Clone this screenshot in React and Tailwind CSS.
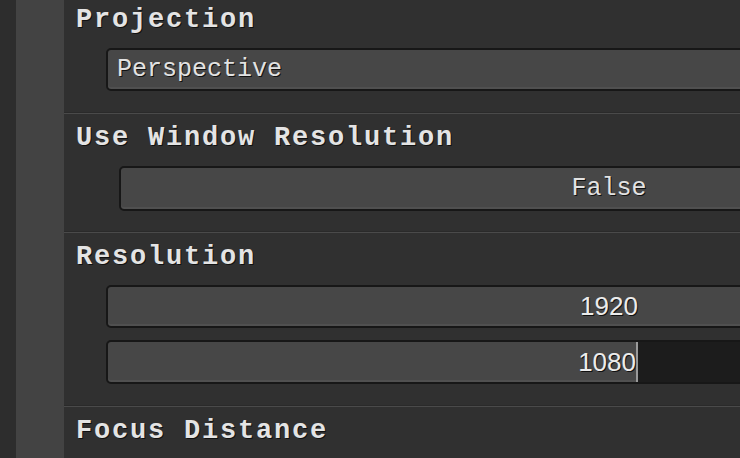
import React from 'react';

const mono = { fontFamily: '"Liberation Mono", "DejaVu Sans Mono", monospace' };

const Heading = ({ children }) => (
  <div
    className="h-[40px] pl-[12px] text-[27px] leading-[40px] font-bold tracking-[1.8px] text-[#e4e4e4] whitespace-nowrap [text-shadow:1px_1px_0_#111]"
    style={mono}
  >
    {children}
  </div>
);

const Field = ({ left, width = 1006, height = 43, className = '', children }) => (
  <div
    className={`mt-[8px] shrink-0 rounded-[5px] border-2 border-[#171717] bg-[#474747] shadow-[inset_0_-2px_0_#505050] overflow-hidden ${className}`}
    style={{ marginLeft: left, width, height }}
  >
    {children}
  </div>
);

const Separator = () => (
  <div className="shrink-0 h-[2px] border-t border-[#2a2a2a] bg-[#4a4a4a]" />
);

const Section = ({ className = '', children }) => (
  <div className={`shrink-0 flex flex-col pt-[4px] ${className}`}>{children}</div>
);

export default function App() {
  return (
    <div className="w-[740px] h-[458px] overflow-hidden flex bg-[#313131]">
      {/* left gutter */}
      <div className="w-4 shrink-0 bg-[#2d2d2d]" />
      <div className="w-12 shrink-0 bg-[#434343]" />

      {/* inspector panel */}
      <div className="flex-1 min-w-0 overflow-hidden flex flex-col bg-[#303030]">
        {/* Projection */}
        <Section className="-mt-[4px] pb-[21px]">
          <Heading>Projection</Heading>
          <Field left={42} height={43}>
            <div
              className="pl-[9px] text-[25px] leading-[39px] text-[#e2e2e2] [text-shadow:1px_1px_0_#111]"
              style={mono}
            >
              Perspective
            </div>
          </Field>
        </Section>
        <Separator />

        {/* Use Window Resolution */}
        <Section className="pb-[20px]">
          <Heading>Use Window Resolution</Heading>
          <Field left={55} width={980} height={45}>
            <div
              className="text-center text-[25px] leading-[41px] text-[#e2e2e2] [text-shadow:1px_1px_0_#111]"
              style={mono}
            >
              False
            </div>
          </Field>
        </Section>
        <Separator />

        {/* Resolution */}
        <Section className="pb-[21px]">
          <Heading>Resolution</Heading>
          <Field left={42} height={43}>
            <div className="text-center text-[26px] leading-[39px] text-[#ececec] [text-shadow:1px_1px_0_#111] font-['Liberation_Sans',sans-serif]">
              1920
            </div>
          </Field>
          <Field left={42} height={44} className="flex !mt-[12px]">
            <div className="w-[530px] shrink-0 flex justify-end border-r-2 border-[#9a9a9a]">
              <div className="text-[26px] leading-[40px] text-[#ececec] [text-shadow:1px_1px_0_#111] font-['Liberation_Sans',sans-serif]">
                1080
              </div>
            </div>
            <div className="flex-1 bg-[#1c1c1c]" />
          </Field>
        </Section>
        <Separator />

        {/* Focus Distance */}
        <Section>
          <Heading>Focus Distance</Heading>
        </Section>
      </div>
    </div>
  );
}
